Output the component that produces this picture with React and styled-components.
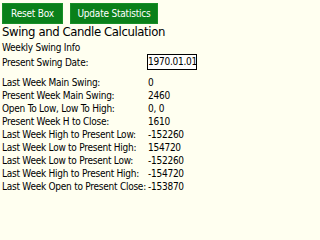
import React from 'react';
import styled, { createGlobalStyle } from 'styled-components';

const GlobalStyle = createGlobalStyle`
  body {
    margin: 0;
    background: #fffff0;
    font-family: "DejaVu Sans Condensed", "Liberation Sans", sans-serif;
    color: #000;
  }
`;

const Panel = styled.div`
  width: 200px;
  height: 200px;
  overflow: hidden;
  background: #fffff0;
  padding: 3px 0 0 2px;
  box-sizing: border-box;
  font-size: 10px;
  letter-spacing: -0.25px;
`;

const ButtonBar = styled.div`
  display: flex;
  gap: 7px;
`;

const Button = styled.button`
  width: ${(p) => p.$width}px;
  height: 21px;
  padding: 0;
  background: #0a801a;
  border: 1px solid #178f27;
  color: #fff;
  font-family: inherit;
  font-size: 10px;
  letter-spacing: -0.2px;
`;

const Title = styled.div`
  font-size: 13px;
  letter-spacing: -0.4px;
  line-height: 16px;
`;

const Label = styled.div`
  line-height: 12px;
  margin-top: 2px;
`;

const DateRow = styled.div`
  display: grid;
  grid-template-columns: 145px 50px;
  align-items: center;
  line-height: 13px;
  margin-bottom: 6px;
`;

const DateBox = styled.div`
  border: 1px solid #000;
  background: #fff;
  height: 14px;
  line-height: 14px;
  text-align: center;
`;

const Stats = styled.div`
  display: grid;
  grid-template-columns: 146px 1fr;
  grid-auto-rows: 13px;
  line-height: 13px;
  white-space: nowrap;
`;

const rows = [
  ['Last Week Main Swing:', '0'],
  ['Present Week Main Swing:', '2460'],
  ['Open To Low, Low To High:', '0, 0'],
  ['Present Week H to Close:', '1610'],
  ['Last Week High to Present Low:', '-152260'],
  ['Last Week Low to Present High:', '154720'],
  ['Last Week Low to Present Low:', '-152260'],
  ['Last Week High to Present High:', '-154720'],
  ['Last Week Open to Present Close:', '-153870'],
];

export default function App() {
  return (
    <>
      <GlobalStyle />
      <Panel>
        <ButtonBar>
          <Button $width={61}>Reset Box</Button>
          <Button $width={88}>Update Statistics</Button>
        </ButtonBar>
        <Title>Swing and Candle Calculation</Title>
        <Label>Weekly Swing Info</Label>
        <DateRow>
          <span>Present Swing Date:</span>
          <DateBox>1970.01.01</DateBox>
        </DateRow>
        <Stats>
          {rows.map(([label, value]) => (
            <React.Fragment key={label}>
              <span>{label}</span>
              <span>{value}</span>
            </React.Fragment>
          ))}
        </Stats>
      </Panel>
    </>
  );
}
